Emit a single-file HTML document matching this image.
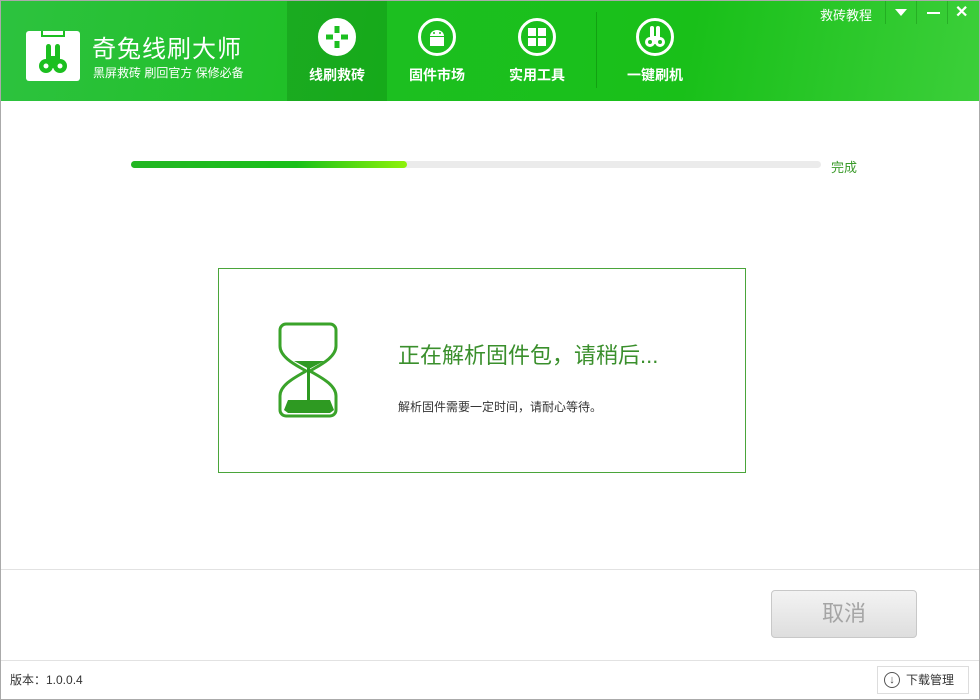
<!DOCTYPE html>
<html><head><meta charset="utf-8"><style>
*{margin:0;padding:0;box-sizing:border-box}
body{width:980px;height:700px;overflow:hidden;background:#fff;font-family:"Liberation Sans","Noto Sans CJK SC",sans-serif;position:relative}
.hdr{position:absolute;left:0;top:0;width:980px;height:101px;background:linear-gradient(100deg,#2dc23f 0%,#1cbf20 40%,#19c019 70%,#3ccf3a 100%)}
.abs{position:absolute}
.nav{position:absolute;top:0;height:101px;width:100px;color:#fff;font-weight:bold;font-size:14px;text-align:center}
.nav .c{width:38px;height:38px;border:3px solid #fff;border-radius:50%;margin:18px auto 0;position:relative}
.nav .t{margin-top:9px}
</style></head><body>
<div class="hdr">
 <div class="abs" style="left:26px;top:31px;width:54px;height:50px;background:#fff;border-radius:3px"></div>
 <div class="abs" style="left:41px;top:31px;width:24px;height:6px;border:2px solid #1cbf20;border-top:none;"></div>
 <svg class="abs" style="left:26px;top:36px" width="54" height="44"><ellipse cx="20" cy="30" rx="7" ry="7" fill="#1cbf20"/><ellipse cx="34" cy="30" rx="7" ry="7" fill="#1cbf20"/><rect x="20" y="8" width="5" height="20" rx="2.5" fill="#1cbf20"/><rect x="29" y="8" width="5" height="20" rx="2.5" fill="#1cbf20"/><rect x="22" y="20" width="10" height="12" fill="#1cbf20"/><circle cx="20" cy="30" r="2.5" fill="#fff"/><circle cx="34" cy="30" r="2.5" fill="#fff"/></svg>
 <div class="abs" style="left:92px;top:29px;color:#fff;font-size:24px;letter-spacing:1px">奇兔线刷大师</div>
 <div class="abs" style="left:93px;top:64px;color:#fff;font-size:12px">黑屏救砖 刷回官方 保修必备</div>
 <div class="nav" style="left:287px;background:rgba(0,80,0,0.18)"><div class="c" style="background:#fff"><svg width="32" height="32" style="position:absolute;left:0;top:0"><g fill="#1cbf20"><rect x="13.5" y="5" width="5" height="7"/><rect x="13.5" y="20" width="5" height="7"/><rect x="5" y="13.5" width="7" height="5"/><rect x="20" y="13.5" width="7" height="5"/></g></svg></div><div class="t">线刷救砖</div></div>
 <div class="nav" style="left:387px"><div class="c"><svg width="32" height="32" style="position:absolute;left:0;top:0"><path d="M9 15a7 6 0 0 1 14 0z M9 16h14v9H9z" fill="#fff"/><circle cx="13" cy="12" r="1" fill="#1cbf20"/><circle cx="19" cy="12" r="1" fill="#1cbf20"/></svg></div><div class="t">固件市场</div></div>
 <div class="nav" style="left:487px"><div class="c"><svg width="32" height="32" style="position:absolute;left:0;top:0"><g fill="#fff"><rect x="7" y="7" width="8" height="8"/><rect x="17" y="7" width="8" height="8"/><rect x="7" y="17" width="8" height="8"/><rect x="17" y="17" width="8" height="8"/></g></svg></div><div class="t">实用工具</div></div>
 <div class="abs" style="left:596px;top:12px;width:1px;height:76px;background:rgba(0,90,0,0.3)"></div>
 <div class="nav" style="left:605px"><div class="c"><svg width="32" height="32" style="position:absolute;left:0;top:0"><g fill="#fff"><rect x="11" y="5" width="4" height="13" rx="2"/><rect x="17" y="5" width="4" height="13" rx="2"/><circle cx="11" cy="21" r="5"/><circle cx="21" cy="21" r="5"/><rect x="12" y="15" width="8" height="8"/></g><circle cx="11" cy="21" r="2" fill="#1cbf20"/><circle cx="21" cy="21" r="2" fill="#1cbf20"/></svg></div><div class="t">一键刷机</div></div>
 <div class="abs" style="left:820px;top:5px;color:#fff;font-size:13px">救砖教程</div>
 <div class="abs" style="left:885px;top:0;width:1px;height:24px;background:rgba(0,90,0,0.25)"></div>
 <div class="abs" style="left:895px;top:9px;width:0;height:0;border-left:6px solid transparent;border-right:6px solid transparent;border-top:7px solid #fff"></div>
 <div class="abs" style="left:916px;top:0;width:1px;height:24px;background:rgba(0,90,0,0.25)"></div>
 <div class="abs" style="left:927px;top:12px;width:13px;height:2px;background:#fff"></div>
 <div class="abs" style="left:947px;top:0;width:1px;height:24px;background:rgba(0,90,0,0.25)"></div>
 <div class="abs" style="left:955px;top:2px;color:#fff;font-size:16px;font-weight:bold">✕</div>
</div>
<div class="abs" style="left:131px;top:161px;width:690px;height:7px;border-radius:4px;background:#ebebeb"></div>
<div class="abs" style="left:131px;top:161px;width:276px;height:7px;border-radius:4px;background:linear-gradient(90deg,#22b622,#19c019 60%,#8ef20a)"></div>
<div class="abs" style="left:831px;top:157px;color:#3a9a2a;font-size:13px">完成</div>
<div class="abs" style="left:218px;top:268px;width:528px;height:205px;border:1px solid #4aa53a"></div>
<svg class="abs" style="left:276px;top:320px" width="66" height="102"><path d="M10 4h44a6 6 0 0 1 6 6v16c0 12-18 20-26 25 8 5 26 13 26 25v14a6 6 0 0 1-6 6H10a6 6 0 0 1-6-6V76c0-12 18-20 26-25C22 46 4 38 4 26V10a6 6 0 0 1 6-6z" fill="none" stroke="#3aa32a" stroke-width="3"/><path d="M18 41h30l-15 8z" fill="#2e9a22"/><rect x="31" y="44" width="3" height="38" fill="#2e9a22"/><path d="M12 80h42l4 10-4 3H12l-4-3z" fill="#2e9a22"/></svg>
<div class="abs" style="left:398px;top:338px;color:#3a8f2c;font-size:22px">正在解析固件包，请稍后...</div>
<div class="abs" style="left:398px;top:398px;color:#333;font-size:12px">解析固件需要一定时间，请耐心等待。</div>
<div class="abs" style="left:0;top:569px;width:980px;height:1px;background:#e2e2e2"></div>
<div class="abs" style="left:771px;top:590px;width:146px;height:48px;border:1px solid #c8c8c8;border-radius:4px;background:linear-gradient(#f3f3f3,#dedede);color:#a5a5a5;font-size:22px;text-align:center;line-height:46px">取消</div>
<div class="abs" style="left:0;top:660px;width:980px;height:1px;background:#e2e2e2"></div>
<div class="abs" style="left:10px;top:671px;color:#333;font-size:12px">版本：1.0.0.4</div>
<div class="abs" style="left:877px;top:666px;width:92px;height:28px;border:1px solid #ddd;background:#fff"></div>
<div class="abs" style="left:884px;top:672px;width:16px;height:16px;border:1px solid #555;border-radius:50%;font-size:11px;text-align:center;line-height:14px;color:#444">↓</div>
<div class="abs" style="left:906px;top:671px;color:#333;font-size:12px">下载管理</div>
<div class="abs" style="left:0;top:0;width:980px;height:700px;border:1px solid #aaa;pointer-events:none"></div>
</body></html>
